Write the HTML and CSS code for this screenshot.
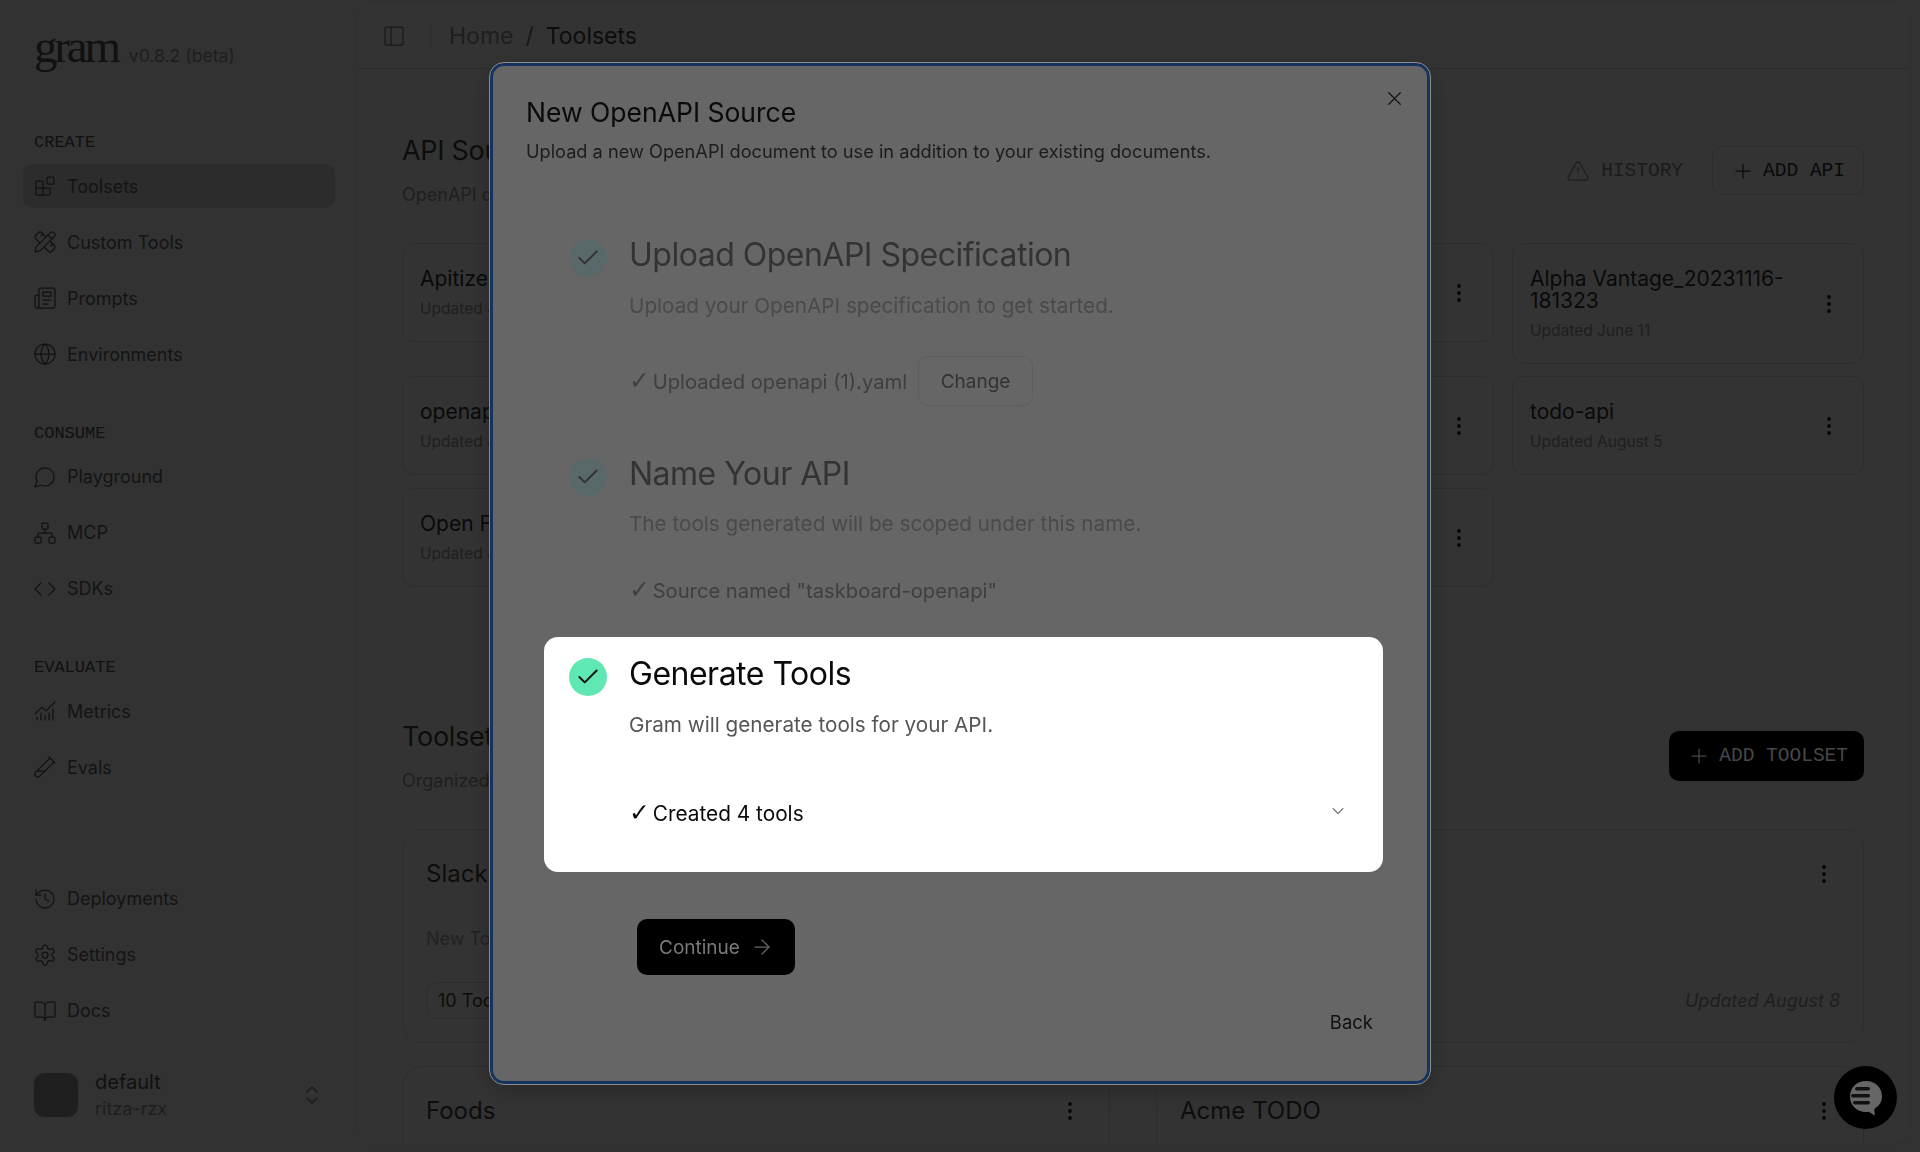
FILE: index.html
```html
<!DOCTYPE html>
<html lang="en">
<head>
    <meta charset="UTF-8">
    <title>Gram - Toolsets</title>
    <link rel="stylesheet" href="styles.css">
</head>
<body>
    <svg class="icon-defs" aria-hidden="true">
        <symbol id="i-blocks" viewBox="0 0 24 24"><rect width="7" height="7" x="14" y="3" rx="1"/><path d="M10 21V8a1 1 0 0 0-1-1H4a1 1 0 0 0-1 1v12a1 1 0 0 0 1 1h12a1 1 0 0 0 1-1v-5a1 1 0 0 0-1-1H3"/></symbol>
        <symbol id="i-ruler" viewBox="0 0 24 24"><path d="M13 7 8.7 2.7a2.41 2.41 0 0 0-3.4 0L2.7 5.3a2.41 2.41 0 0 0 0 3.4L7 13"/><path d="m8 6 2-2"/><path d="m18 16 2-2"/><path d="m17 11 4.3 4.3c.94.94.94 2.46 0 3.4l-2.6 2.6c-.94.94-2.46.94-3.4 0L11 17"/><path d="M21.174 6.812a1 1 0 0 0-3.986-3.987L3.842 16.174a2 2 0 0 0-.5.83l-1.321 4.352a.5.5 0 0 0 .623.622l4.353-1.32a2 2 0 0 0 .83-.497z"/><path d="m15 5 4 4"/></symbol>
        <symbol id="i-news" viewBox="0 0 24 24"><path d="M4 22h16a2 2 0 0 0 2-2V4a2 2 0 0 0-2-2H8a2 2 0 0 0-2 2v16a2 2 0 0 1-2 2Zm0 0a2 2 0 0 1-2-2v-9c0-1.1.9-2 2-2h2"/><path d="M18 14h-8"/><path d="M15 18h-5"/><path d="M10 6h8v4h-8V6Z"/></symbol>
        <symbol id="i-globe" viewBox="0 0 24 24"><circle cx="12" cy="12" r="10"/><path d="M12 2a14.5 14.5 0 0 0 0 20 14.5 14.5 0 0 0 0-20"/><path d="M2 12h20"/></symbol>
        <symbol id="i-chat" viewBox="0 0 24 24"><path d="M7.9 20A9 9 0 1 0 4 16.1L2 22Z"/></symbol>
        <symbol id="i-network" viewBox="0 0 24 24"><rect x="16" y="16" width="6" height="6" rx="1"/><rect x="2" y="16" width="6" height="6" rx="1"/><rect x="9" y="2" width="6" height="6" rx="1"/><path d="M5 16v-3a1 1 0 0 1 1-1h12a1 1 0 0 1 1 1v3"/><path d="M12 12V8"/></symbol>
        <symbol id="i-code" viewBox="0 0 24 24"><path d="m16 18 6-6-6-6"/><path d="m8 6-6 6 6 6"/></symbol>
        <symbol id="i-metrics" viewBox="0 0 24 24"><path d="M12 16v5"/><path d="M16 14v7"/><path d="M20 10v11"/><path d="m22 3-8.646 8.646a.5.5 0 0 1-.708 0L9.354 8.354a.5.5 0 0 0-.707 0L2 15"/><path d="M4 18v3"/><path d="M8 14v7"/></symbol>
        <symbol id="i-tube" viewBox="0 0 24 24"><path d="M21 7 6.82 21.18a2.83 2.83 0 0 1-3.99-.01a2.83 2.83 0 0 1 0-4L17 3"/><path d="m16 2 6 6"/><path d="M12 16H4"/></symbol>
        <symbol id="i-history" viewBox="0 0 24 24"><path d="M3 12a9 9 0 1 0 9-9 9.75 9.75 0 0 0-6.74 2.74L3 8"/><path d="M3 3v5h5"/><path d="M12 7v5l4 2"/></symbol>
        <symbol id="i-gear" viewBox="0 0 24 24"><path d="M12.22 2h-.44a2 2 0 0 0-2 2v.18a2 2 0 0 1-1 1.73l-.43.25a2 2 0 0 1-2 0l-.15-.08a2 2 0 0 0-2.73.73l-.22.38a2 2 0 0 0 .73 2.73l.15.1a2 2 0 0 1 1 1.72v.51a2 2 0 0 1-1 1.74l-.15.09a2 2 0 0 0-.73 2.73l.22.38a2 2 0 0 0 2.73.73l.15-.08a2 2 0 0 1 2 0l.43.25a2 2 0 0 1 1 1.73V20a2 2 0 0 0 2 2h.44a2 2 0 0 0 2-2v-.18a2 2 0 0 1 1-1.73l.43-.25a2 2 0 0 1 2 0l.15.08a2 2 0 0 0 2.73-.73l.22-.39a2 2 0 0 0-.73-2.73l-.15-.08a2 2 0 0 1-1-1.74v-.5a2 2 0 0 1 1-1.74l.15-.09a2 2 0 0 0 .73-2.73l-.22-.38a2 2 0 0 0-2.73-.73l-.15.08a2 2 0 0 1-2 0l-.43-.25a2 2 0 0 1-1-1.73V4a2 2 0 0 0-2-2z"/><circle cx="12" cy="12" r="3"/></symbol>
        <symbol id="i-book" viewBox="0 0 24 24"><path d="M12 7v14"/><path d="M3 18a1 1 0 0 1-1-1V4a1 1 0 0 1 1-1h5a4 4 0 0 1 4 4 4 4 0 0 1 4-4h5a1 1 0 0 1 1 1v13a1 1 0 0 1-1 1h-6a3 3 0 0 0-3 3 3 3 0 0 0-3-3z"/></symbol>
        <symbol id="i-updown" viewBox="0 0 24 24"><path d="m7 15 5 5 5-5"/><path d="m7 9 5-5 5 5"/></symbol>
        <symbol id="i-panel" viewBox="0 0 24 24"><rect width="18" height="18" x="3" y="3" rx="2"/><path d="M9 3v18"/></symbol>
        <symbol id="i-alert" viewBox="0 0 24 24"><path d="m21.73 18-8-14a2 2 0 0 0-3.48 0l-8 14A2 2 0 0 0 4 21h16a2 2 0 0 0 1.73-3"/><path d="M12 9v4"/><path d="M12 17h.01"/></symbol>
        <symbol id="i-plus" viewBox="0 0 24 24"><path d="M5 12h14"/><path d="M12 5v14"/></symbol>
        <symbol id="i-x" viewBox="0 0 24 24"><path d="M18 6 6 18"/><path d="m6 6 12 12"/></symbol>
        <symbol id="i-down" viewBox="0 0 24 24"><path d="m6 9 6 6 6-6"/></symbol>
        <symbol id="i-arrow" viewBox="0 0 24 24"><path d="M5 12h14"/><path d="m12 5 7 7-7 7"/></symbol>
        <symbol id="i-check" viewBox="0 0 24 24"><path d="M20 6 9 17l-5-5"/></symbol>
        <symbol id="i-kebab" viewBox="0 0 24 24"><circle cx="12" cy="5" r="1"/><circle cx="12" cy="12" r="1"/><circle cx="12" cy="19" r="1"/></symbol>
    </svg>

    <div class="app">
        <aside class="sidebar">
            <div class="brand">
                <span class="brand-name">gram</span>
                <span class="brand-version">v0.8.2 (beta)</span>
            </div>

            <nav class="nav-group">
                <div class="nav-label">CREATE</div>
                <a class="nav-item active"><svg class="icon"><use href="#i-blocks"/></svg>Toolsets</a>
                <a class="nav-item"><svg class="icon"><use href="#i-ruler"/></svg>Custom Tools</a>
                <a class="nav-item"><svg class="icon"><use href="#i-news"/></svg>Prompts</a>
                <a class="nav-item"><svg class="icon"><use href="#i-globe"/></svg>Environments</a>
            </nav>
            <nav class="nav-group">
                <div class="nav-label">CONSUME</div>
                <a class="nav-item"><svg class="icon"><use href="#i-chat"/></svg>Playground</a>
                <a class="nav-item"><svg class="icon"><use href="#i-network"/></svg>MCP</a>
                <a class="nav-item"><svg class="icon"><use href="#i-code"/></svg>SDKs</a>
            </nav>
            <nav class="nav-group">
                <div class="nav-label">EVALUATE</div>
                <a class="nav-item"><svg class="icon"><use href="#i-metrics"/></svg>Metrics</a>
                <a class="nav-item"><svg class="icon"><use href="#i-tube"/></svg>Evals</a>
            </nav>

            <nav class="nav-bottom">
                <a class="nav-item"><svg class="icon"><use href="#i-history"/></svg>Deployments</a>
                <a class="nav-item"><svg class="icon"><use href="#i-gear"/></svg>Settings</a>
                <a class="nav-item"><svg class="icon"><use href="#i-book"/></svg>Docs</a>
            </nav>

            <div class="org">
                <div class="org-avatar"></div>
                <div class="org-text">
                    <div class="org-name">default</div>
                    <div class="org-slug">ritza-rzx</div>
                </div>
                <svg class="icon org-switch"><use href="#i-updown"/></svg>
            </div>
        </aside>

        <main class="main">
            <header class="topbar">
                <svg class="icon"><use href="#i-panel"/></svg>
                <span class="topbar-divider"></span>
                <span class="crumb">Home</span>
                <span class="crumb-sep">/</span>
                <span class="crumb current">Toolsets</span>
            </header>

            <div class="content">
                <section class="section-head">
                    <div>
                        <h2 class="section-title">API Sources</h2>
                        <p class="section-sub">OpenAPI documents</p>
                    </div>
                    <div class="section-actions">
                        <button class="btn-mono ghost"><svg class="icon"><use href="#i-alert"/></svg>HISTORY</button>
                        <button class="btn-mono outline"><svg class="icon"><use href="#i-plus"/></svg>ADD API</button>
                    </div>
                </section>

                <div class="source-grid">
                    <div class="source-card">
                        <div><div class="source-name">Apitize</div><div class="source-date">Updated June 11</div></div>
                        <svg class="kebab"><use href="#i-kebab"/></svg>
                    </div>
                    <div class="source-card"></div>
                    <div class="source-card">
                        <div></div>
                        <svg class="kebab"><use href="#i-kebab"/></svg>
                    </div>
                    <div class="source-card">
                        <div><div class="source-name">Alpha Vantage_20231116-<br>181323</div><div class="source-date">Updated June 11</div></div>
                        <svg class="kebab"><use href="#i-kebab"/></svg>
                    </div>
                    <div class="source-card">
                        <div><div class="source-name">openapi</div><div class="source-date">Updated June 11</div></div>
                        <svg class="kebab"><use href="#i-kebab"/></svg>
                    </div>
                    <div class="source-card"></div>
                    <div class="source-card">
                        <div></div>
                        <svg class="kebab"><use href="#i-kebab"/></svg>
                    </div>
                    <div class="source-card">
                        <div><div class="source-name">todo-api</div><div class="source-date">Updated August 5</div></div>
                        <svg class="kebab"><use href="#i-kebab"/></svg>
                    </div>
                    <div class="source-card">
                        <div><div class="source-name">Open Food</div><div class="source-date">Updated June 11</div></div>
                        <svg class="kebab"><use href="#i-kebab"/></svg>
                    </div>
                    <div class="source-card"></div>
                    <div class="source-card">
                        <div></div>
                        <svg class="kebab"><use href="#i-kebab"/></svg>
                    </div>
                </div>

                <section class="section-head toolsets-head">
                    <div>
                        <h2 class="section-title">Toolsets</h2>
                        <p class="section-sub">Organized tools</p>
                    </div>
                    <div class="section-actions">
                        <button class="btn-mono solid"><svg class="icon"><use href="#i-plus"/></svg>ADD TOOLSET</button>
                    </div>
                </section>

                <div class="toolset-grid">
                    <div class="toolset-card">
                        <div class="toolset-top"><span class="toolset-name">Slack</span></div>
                        <p class="toolset-desc">New Tools</p>
                        <div class="toolset-foot"><span class="tool-pill">10 Tools</span></div>
                    </div>
                    <div class="toolset-card">
                        <div class="toolset-top"><span class="toolset-name"></span><svg class="kebab"><use href="#i-kebab"/></svg></div>
                        <p class="toolset-desc"></p>
                        <div class="toolset-foot"><span></span><span class="toolset-date">Updated August 8</span></div>
                    </div>
                    <div class="toolset-card">
                        <div class="toolset-top"><span class="toolset-name">Foods</span><svg class="kebab"><use href="#i-kebab"/></svg></div>
                    </div>
                    <div class="toolset-card">
                        <div class="toolset-top"><span class="toolset-name">Acme TODO</span><svg class="kebab"><use href="#i-kebab"/></svg></div>
                    </div>
                </div>
            </div>
        </main>
    </div>

    <div class="overlay"></div>

    <div class="modal">
        <svg class="modal-close"><use href="#i-x"/></svg>
        <h1 class="modal-title">New OpenAPI Source</h1>
        <p class="modal-sub">Upload a new OpenAPI document to use in addition to your existing documents.</p>

        <div class="steps">
            <div class="step done">
                <span class="step-check"><svg><use href="#i-check"/></svg></span>
                <div class="step-body">
                    <h3 class="step-title">Upload OpenAPI Specification</h3>
                    <p class="step-desc">Upload your OpenAPI specification to get started.</p>
                    <div class="step-detail">
                        <span><span class="tick">✓</span> Uploaded openapi (1).yaml</span>
                        <button class="btn-change">Change</button>
                    </div>
                </div>
            </div>
            <div class="step done">
                <span class="step-check"><svg><use href="#i-check"/></svg></span>
                <div class="step-body">
                    <h3 class="step-title">Name Your API</h3>
                    <p class="step-desc">The tools generated will be scoped under this name.</p>
                    <div class="step-detail">
                        <span><span class="tick">✓</span> Source named "taskboard-openapi"</span>
                    </div>
                </div>
            </div>
            <div class="step current">
                <span class="step-check"><svg><use href="#i-check"/></svg></span>
                <div class="step-body">
                    <h3 class="step-title">Generate Tools</h3>
                    <p class="step-desc">Gram will generate tools for your API.</p>
                    <div class="step-detail step-result">
                        <span><span class="tick">✓</span> Created 4 tools</span>
                        <svg class="result-toggle"><use href="#i-down"/></svg>
                    </div>
                </div>
            </div>
        </div>

        <button class="btn-continue">Continue<svg><use href="#i-arrow"/></svg></button>
        <div class="modal-foot"><button class="btn-back">Back</button></div>
    </div>

    <div class="chat-launcher">
        <svg viewBox="0 0 34 36">
            <path class="bubble" d="M17 1C7.6 1 1 7.6 1 16.5S7.6 32 17 32c.9 0 1.8-.1 2.6-.2L26 35.5l-.8-6.6C30.200 26.200 33 21.800 33 16.500 33 7.600 26.400 1 17 1Z"/>
            <rect class="bubble-line" x="6" y="7" width="15" height="3.400" rx="1.700"/>
            <rect class="bubble-line" x="2" y="14" width="19" height="3.400" rx="1.700"/>
            <rect class="bubble-line" x="4" y="21" width="17" height="3.400" rx="1.700"/>
        </svg>
    </div>
</body>
</html>
```

FILE: styles.css
```css
* {
    box-sizing: border-box;
}
html, body {
    height: 100%;
}
body {
    margin: 0;
    overflow: hidden;
    font-family: "Inter", "Noto Sans", sans-serif;
    color: #555;
    background-color: #fafafa;
}
h1, h2, h3, p {
    margin: 0;
    font-weight: 400;
}
button {
    font: inherit;
    border: none;
    background: none;
    padding: 0;
}
svg {
    fill: none;
    stroke: currentColor;
    stroke-width: 1.25;
    stroke-linecap: round;
    stroke-linejoin: round;
}
.icon-defs {
    display: none;
}
.icon {
    width: 24px;
    height: 24px;
    flex: none;
}

.app {
    display: flex;
    height: 100%;
}

/* sidebar */
.sidebar {
    flex: 0 0 356px;
    display: flex;
    flex-direction: column;
    padding: 16px 21px 30px 23px;
}
.brand {
    display: flex;
    align-items: baseline;
    gap: 11px;
    height: 60px;
    padding-left: 11px;
    margin-bottom: 57px;
    line-height: 60px;
}
.brand-name {
    font-family: "Liberation Serif", serif;
    font-size: 47px;
    letter-spacing: -3.200px;
    color: #555;
}
.brand-version {
    font-size: 17.6px;
    color: #999;
}
.nav-group {
    display: flex;
    flex-direction: column;
    gap: 12px;
    margin-bottom: 47.5px;
}
.nav-bottom {
    display: flex;
    flex-direction: column;
    gap: 12px;
    margin-top: auto;
    margin-bottom: 34.5px;
}
.nav-label {
    height: 20px;
    line-height: 20px;
    margin-bottom: -1px;
    padding-left: 11px;
    font-family: "Liberation Mono", monospace;
    font-size: 17px;
    color: #555;
}
.nav-item {
    display: flex;
    align-items: center;
    gap: 10px;
    height: 44px;
    padding-left: 10px;
    border-radius: 10px;
    font-size: 18px;
    color: #666;
}
.nav-item .icon {
    color: #555;
}
.nav-item.active {
    background-color: #dcdcdc;
}
.org {
    display: flex;
    align-items: center;
    padding-left: 11px;
}
.org-avatar {
    width: 44px;
    height: 44px;
    border-radius: 10px;
    background-color: #999;
    margin-right: 17px;
}
.org-text {
    flex: 1;
    margin-top: 2px;
}
.org-name {
    font-size: 20px;
    line-height: 26px;
    color: #555;
}
.org-slug {
    font-size: 18px;
    line-height: 27px;
    color: #999;
}
.org-switch {
    margin-right: 11px;
    color: #777;
}

/* main panel */
.main {
    flex: 1;
    display: flex;
    flex-direction: column;
    min-width: 0;
    margin: 2px 10px 7px 0;
    background-color: #fff;
    border: 1px solid #eee;
    border-radius: 20px;
    overflow: hidden;
}
.topbar {
    display: flex;
    align-items: center;
    flex: 0 0 66px;
    padding-left: 25px;
    border-bottom: 1px solid #ddd;
    color: #777;
}
.topbar-divider {
    width: 1px;
    height: 22px;
    margin: 0 18px 0 24px;
    background-color: #ddd;
}
.crumb {
    font-size: 23px;
    color: #999;
}
.crumb.current {
    color: #444;
}
.crumb-sep {
    margin: 0 12px;
    font-size: 23px;
    color: #777;
}
.content {
    padding: 64px 45px 0 45px;
}
.section-head {
    display: flex;
    justify-content: space-between;
    align-items: flex-start;
    height: 110px;
}
.toolsets-head {
    margin-top: 132px;
}
.section-title {
    font-size: 27px;
    line-height: 36px;
    letter-spacing: -.3px;
    color: #444;
}
.section-sub {
    margin-top: 15px;
    font-size: 18px;
    line-height: 22px;
    color: #999;
}
.section-actions {
    display: flex;
    align-items: center;
    gap: 29px;
    margin-top: 13px;
}
.btn-mono {
    display: flex;
    align-items: center;
    gap: 8px;
    height: 49px;
    padding: 0 18px;
    border-radius: 10px;
    font-family: "Liberation Mono", monospace;
    font-size: 19.5px;
}
.btn-mono.ghost {
    gap: 11px;
    padding: 0;
    color: #888;
}
.btn-mono.outline {
    border: 1px solid #ddd;
    color: #333;
}
.btn-mono.solid {
    position: relative;
    z-index: 1;
    height: 50px;
    margin-top: -1px;
    padding: 0 16px 0 18px;
    background-color: #000;
    color: #484848;
}

.source-grid {
    display: grid;
    grid-template-columns: repeat(4, 1fr);
    gap: 12.5px 18px;
    align-items: start;
}
.source-card {
    display: flex;
    justify-content: space-between;
    align-items: center;
    min-height: 99px;
    padding: 22px 22px 20.5px 17px;
    border: 1px solid #ddd;
    border-radius: 12px;
}
.source-name {
    padding-top: 2px;
    font-size: 21px;
    line-height: 22px;
    color: #333;
}
.source-date {
    margin-top: 8px;
    font-size: 15.5px;
    line-height: 22px;
    color: #999;
}
.kebab {
    flex: none;
    width: 24px;
    height: 24px;
    color: #222;
    stroke-width: 1.800;
}

.toolset-grid {
    display: grid;
    grid-template-columns: repeat(2, 1fr);
    gap: 23px 46px;
}
.toolset-card {
    min-height: 214px;
    padding: 28px 23px 23px;
    border: 1px solid #ddd;
    border-radius: 20px;
}
.toolset-top {
    display: flex;
    justify-content: space-between;
    align-items: center;
    height: 32px;
}
.toolset-top .kebab {
    margin-right: 4px;
}
.toolset-name {
    font-size: 24px;
    color: #444;
}
.toolset-desc {
    height: 22px;
    margin-top: 38px;
    font-size: 18px;
    line-height: 22px;
    color: #aaa;
}
.toolset-foot {
    display: flex;
    justify-content: space-between;
    align-items: center;
    height: 37px;
    margin-top: 32px;
}
.tool-pill {
    display: flex;
    align-items: center;
    height: 37px;
    padding: 0 11px;
    border: 1px solid #ddd;
    border-radius: 10px;
    font-size: 18px;
    color: #444;
}
.toolset-date {
    font-size: 18px;
    font-style: italic;
    color: #999;
}

/* dim layer */
.overlay {
    position: fixed;
    inset: 0;
    background-color: rgba(0, 0, 0, 0.8);
}

/* dialog */
.modal {
    position: fixed;
    z-index: 2;
    left: 490px;
    top: 63px;
    width: 940px;
    height: 1021px;
    padding: 35px 44px 0 33px;
    background-color: #666;
    border: 3px solid #14335f;
    outline: 1px solid #8d8d8d;
    border-radius: 14px;
    box-shadow: 0 6px 24px rgba(0, 0, 0, 0.25);
}
.modal-close {
    position: absolute;
    right: 21px;
    top: 21px;
    width: 23px;
    height: 23px;
    color: #111;
}
.modal-title {
    font-size: 26.5px;
    line-height: 22px;
    color: #0a0a0a;
}
.modal-sub {
    margin-top: 16px;
    font-size: 18.2px;
    line-height: 24px;
    color: #1c1c1c;
}
.steps {
    display: flex;
    flex-direction: column;
    gap: 15.5px;
    margin-top: 55px;
    margin-left: 18px;
}
.step {
    display: flex;
    gap: 22px;
    padding: 15px 26px 15px 25px;
    border-radius: 14px;
}
.step-check {
    display: flex;
    align-items: center;
    justify-content: center;
    flex: none;
    width: 38px;
    height: 38px;
    margin-top: 6px;
    border-radius: 50%;
    background-color: #596868;
    color: #333;
}
.step-check svg {
    width: 26px;
    height: 26px;
    stroke-width: 1.800;
}
.step-body {
    flex: 1;
    min-width: 0;
}
.step-title {
    font-size: 32px;
    line-height: 44px;
    letter-spacing: -.5px;
    color: #333;
}
.step-desc {
    margin-top: 15.5px;
    font-size: 20.7px;
    line-height: 26px;
    color: #4a4a4a;
}
.step-detail {
    display: flex;
    align-items: center;
    gap: 11px;
    min-height: 32px;
    margin-top: 37.5px;
    font-size: 20.2px;
    color: #3f3f3f;
}
.tick {
    display: inline-block;
    margin-right: -3px;
    font-family: "DejaVu Sans", sans-serif;
    font-size: 25px;
    line-height: 0;
}
.btn-change {
    width: 115px;
    height: 50px;
    border: 1px solid #5e5e5e;
    border-radius: 10px;
    font-size: 19px;
    color: #333;
}
.step.current {
    padding-bottom: 20px;
    background-color: #fff;
}
.step.current .step-check {
    background-color: #5fe8b4;
    color: #111;
}
.step.current .step-title,
.step.current .step-detail {
    color: #0a0a0a;
}
.step.current .step-desc {
    color: #555;
}
.step-result {
    justify-content: space-between;
    padding: 26px 0;
    font-size: 20.8px;
}
.result-toggle {
    width: 20px;
    height: 20px;
    margin: -6px 9px 0 0;
    color: #444;
}
.btn-continue {
    display: flex;
    align-items: center;
    gap: 10px;
    width: 158px;
    height: 56px;
    margin: 47px 0 0 111px;
    padding-left: 22px;
    border-radius: 10px;
    background-color: #000;
    font-size: 19px;
    color: #7a7a7a;
}
.btn-continue svg {
    width: 24px;
    height: 24px;
    color: #666;
}
.modal-foot {
    display: flex;
    justify-content: flex-end;
    margin-top: 22px;
}
.btn-back {
    height: 50px;
    padding: 0 10px;
    font-size: 18.5px;
    color: #111;
}

.chat-launcher {
    position: fixed;
    z-index: 2;
    right: 23px;
    bottom: 23px;
    display: flex;
    align-items: center;
    justify-content: center;
    width: 63px;
    height: 63px;
    border-radius: 50%;
    background-color: #000;
}
.chat-launcher svg {
    width: 34px;
    height: 36px;
    stroke: none;
}
.bubble {
    fill: #666;
}
.bubble-line {
    fill: #111;
}
```
